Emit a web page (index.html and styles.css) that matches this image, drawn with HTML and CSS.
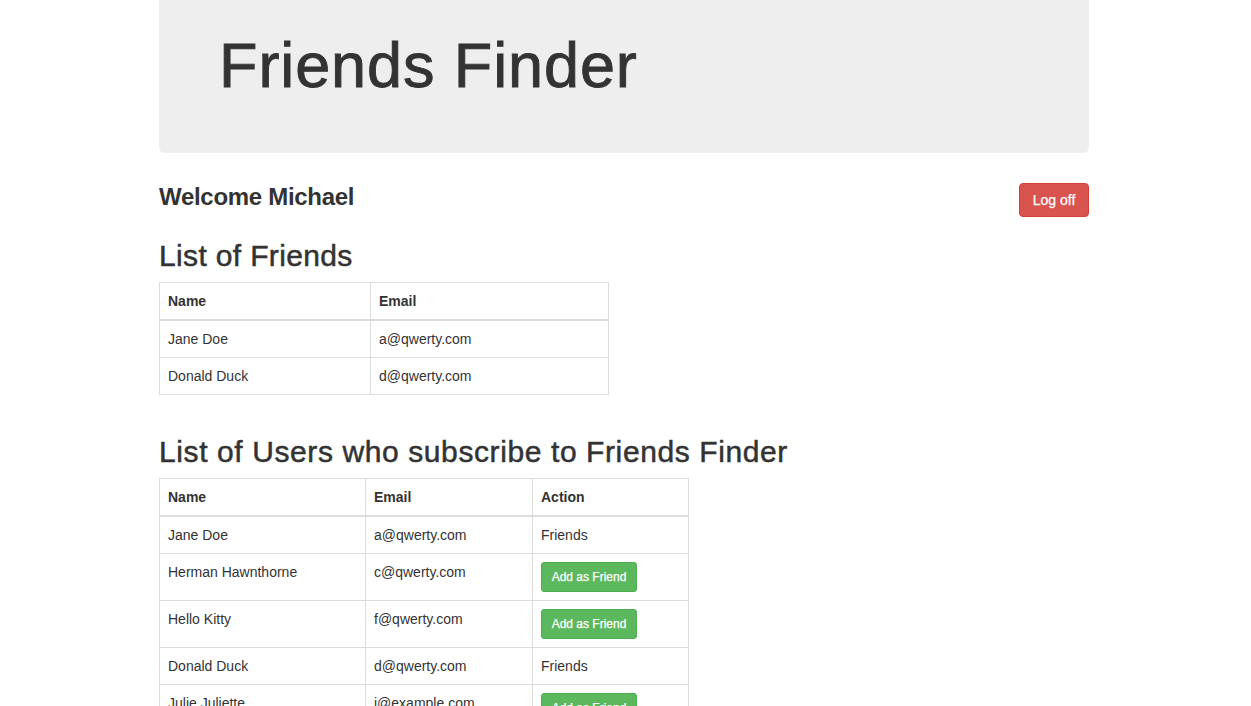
FILE: index.html
```html
<!DOCTYPE html>
<html lang="en">
<head>
<meta charset="utf-8">
<title>Friends Finder</title>
<link rel="stylesheet" href="styles.css">
</head>
<body>
<div class="container">
  <div class="jumbotron">
    <h1>Friends Finder</h1>
  </div>

  <div class="welcome-row">
    <h3 class="welcome">Welcome Michael</h3>
    <button class="btn btn-danger">Log off</button>
  </div>

  <h2 class="section-title first">List of Friends</h2>
  <table class="table table-friends">
    <colgroup><col class="c-name1"><col class="c-email1"></colgroup>
    <thead>
      <tr><th>Name</th><th>Email</th></tr>
    </thead>
    <tbody>
      <tr><td>Jane Doe</td><td>a@qwerty.com</td></tr>
      <tr><td>Donald Duck</td><td>d@qwerty.com</td></tr>
    </tbody>
  </table>

  <h2 class="section-title second">List of Users who subscribe to Friends Finder</h2>
  <table class="table table-users">
    <colgroup><col class="c-name2"><col class="c-email2"><col class="c-action2"></colgroup>
    <thead>
      <tr><th>Name</th><th>Email</th><th>Action</th></tr>
    </thead>
    <tbody>
      <tr><td>Jane Doe</td><td>a@qwerty.com</td><td>Friends</td></tr>
      <tr><td>Herman Hawnthorne</td><td>c@qwerty.com</td><td><button class="btn btn-sm btn-success">Add as Friend</button></td></tr>
      <tr><td>Hello Kitty</td><td>f@qwerty.com</td><td><button class="btn btn-sm btn-success">Add as Friend</button></td></tr>
      <tr><td>Donald Duck</td><td>d@qwerty.com</td><td>Friends</td></tr>
      <tr><td>Julie Juliette</td><td>j@example.com</td><td><button class="btn btn-sm btn-success">Add as Friend</button></td></tr>
    </tbody>
  </table>
</div>
</body>
</html>
```

FILE: styles.css
```css
* {
  box-sizing: border-box;
}

html, body {
  margin: 0;
  padding: 0;
  background: #fff;
}

body {
  font-family: "Liberation Sans", Arial, Helvetica, sans-serif;
  font-size: 14px;
  line-height: 20px;
  color: #333;
}

.container {
  width: 933px;
  margin: 0 auto;
  padding-right: 3px;
}

.jumbotron {
  background: #eeeeee;
  border-radius: 0 0 6px 6px;
  padding: 31px 60px 53px;
  margin-bottom: 30px;
}

.jumbotron h1 {
  margin: 0;
  font-size: 63px;
  line-height: 1.1;
  font-weight: 400;
  letter-spacing: 0.9px;
  -webkit-text-stroke: 0.9px #333;
  color: #333;
}

.welcome-row {
  display: flex;
  justify-content: space-between;
  align-items: flex-start;
}

.welcome {
  margin: 0;
  padding-top: 0.5px;
  font-size: 24px;
  line-height: 1.1;
  font-weight: 700;
  letter-spacing: -0.3px;
}

.btn {
  font-family: inherit;
  display: inline-block;
  border: 1px solid transparent;
  cursor: pointer;
  color: #fff;
  white-space: nowrap;
  -webkit-text-stroke: 0.25px #fff;
}

.btn-danger {
  background: #d9534f;
  border-color: #d43f3a;
  font-size: 14px;
  line-height: 20px;
  padding: 6px 12px;
  border-radius: 4px;
  width: 70px;
}

.btn-sm {
  font-size: 12px;
  line-height: 18px;
  padding: 5px 0;
  border-radius: 3px;
  width: 96px;
  text-align: center;
}

.btn-success {
  background: #5cb85c;
  border-color: #4cae4c;
}

.section-title {
  margin: 22px 0 10px;
  font-size: 30px;
  line-height: 33px;
  font-weight: 400;
  -webkit-text-stroke: 0.5px #333;
}

.section-title.first {
  letter-spacing: 0.35px;
}

.section-title.second {
  margin-top: 0;
  letter-spacing: 0.6px;
}

.table {
  border-collapse: collapse;
  border-spacing: 0;
  border: 1px solid #ddd;
  margin: 0 0 20px;
  table-layout: fixed;
}

.table-friends {
  width: 449px;
  margin-bottom: 40px;
}

.table-users {
  width: 529px;
}

.c-name1 { width: 211px; }
.c-email1 { width: 238px; }
.c-name2 { width: 206px; }
.c-email2 { width: 167px; }
.c-action2 { width: 156px; }

.table th,
.table td {
  border: 1px solid #ddd;
  padding: 8px;
  line-height: 20px;
  vertical-align: top;
  text-align: left;
}

.table th {
  font-weight: 700;
  border-bottom-width: 2px;
}
```
